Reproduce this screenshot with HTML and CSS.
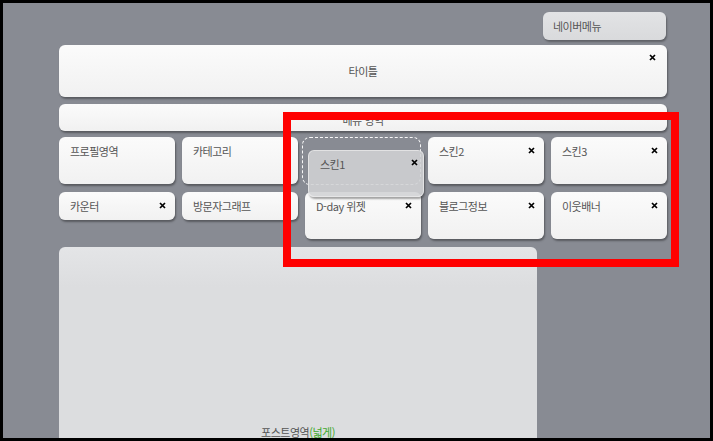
FILE: index.html
```html
<!DOCTYPE html>
<html lang="ko">
<head>
<meta charset="utf-8">
<title>레이아웃 설정</title>
<link rel="stylesheet" href="styles.css">
</head>
<body>
<div class="frame">
  <div class="page">
    <div class="topbar"><div class="naver">네이버메뉴</div></div>
    <div class="block title">타이틀<svg class="x" viewBox="0 0 7 7"><path d="M1 1L6 6M6 1L1 6"/></svg></div>
    <div class="block menu">메뉴 영역</div>
    <div class="grid">
      <div class="card">프로필영역</div>
      <div class="card">카테고리</div>
      <div class="slot"></div>
      <div class="card">스킨2<svg class="x" viewBox="0 0 7 7"><path d="M1 1L6 6M6 1L1 6"/></svg></div>
      <div class="card">스킨3<svg class="x" viewBox="0 0 7 7"><path d="M1 1L6 6M6 1L1 6"/></svg></div>
      <div class="card short">카운터<svg class="x" viewBox="0 0 7 7"><path d="M1 1L6 6M6 1L1 6"/></svg></div>
      <div class="card short">방문자그래프</div>
      <div class="card">D-day 위젯<svg class="x" viewBox="0 0 7 7"><path d="M1 1L6 6M6 1L1 6"/></svg></div>
      <div class="card">블로그정보<svg class="x" viewBox="0 0 7 7"><path d="M1 1L6 6M6 1L1 6"/></svg></div>
      <div class="card">이웃배너<svg class="x" viewBox="0 0 7 7"><path d="M1 1L6 6M6 1L1 6"/></svg></div>
    </div>
    <div class="post">포스트영역<span class="wide">(넓게)</span></div>
  </div>
  <div class="card drag">스킨1<svg class="x" viewBox="0 0 7 7"><path d="M1 1L6 6M6 1L1 6"/></svg></div>
  <div class="highlight"></div>
</div>
</body>
</html>
```
FILE: styles.css
```css
* { box-sizing: border-box; }
html, body { margin: 0; padding: 0; background: #000; }
body {
  font-family: "Noto Sans CJK KR", "Noto Sans", sans-serif;
  font-size: 11px;
  color: #555;
}
.frame {
  position: relative;
  width: 713px;
  height: 441px;
  border: 3px solid #000;
  background: #888b93;
  overflow: hidden;
}
.page {
  padding: 9px 0 0 56px;
  width: 664px;
}
.topbar { display: flex; justify-content: flex-end; padding-right: 1px; }
.naver {
  width: 123px;
  height: 28px;
  padding-left: 10px;
  line-height: 28px;
  background: linear-gradient(#e2e3e5, #d9dadc);
  border-radius: 6px;
  box-shadow: 1px 2px 2px rgba(0,0,0,0.3);
  letter-spacing: -0.5px;
}
.block, .card {
  position: relative;
  background: linear-gradient(#fbfbfb, #f1f1f1);
  border-radius: 6px;
  box-shadow: 1px 2px 2px rgba(0,0,0,0.35);
  letter-spacing: -0.5px;
}
.block {
  margin-top: 5px;
  text-align: center;
}
.title { height: 52px; line-height: 52px; }
.menu { margin-top: 7px; height: 27px; padding-top: 5px; line-height: 22px; }
.x {
  position: absolute;
  top: 10px;
  right: 9px;
  width: 7px;
  height: 7px;
  fill: none;
  stroke: #000;
  stroke-width: 1.7;
}
.title .x { top: 9px; right: 11px; }
.grid {
  margin-top: 6px;
  display: grid;
  grid-template-columns: repeat(5, 116px);
  grid-auto-rows: 47px;
  column-gap: 7px;
  row-gap: 8px;
  align-items: start;
}
.card {
  height: 47px;
  padding: 6px 0 0 11px;
  line-height: 16px;
}
.card.short { height: 28px; }
.slot {
  height: 48px;
  margin-left: -3px;
  border: 1px dashed #f8f8f8;
  border-radius: 8px;
}
.post {
  margin-top: 8px;
  width: 478px;
  height: 220px;
  padding-top: 178px;
  text-align: center;
  line-height: 14px;
  background: linear-gradient(#e4e5e7, #dcdddf 40px);
  border-radius: 6px 6px 0 0;
  letter-spacing: -0.5px;
}
.wide { color: #3fa82c; }
.drag {
  position: absolute;
  left: 305px;
  top: 147px;
  width: 116px;
  height: 47px;
  padding: 5px 0 0 11px;
  background: rgba(208, 209, 212, 0.88);
  border: 1px solid rgba(236,236,238,0.7);
}
.drag .x { top: 8px; right: 5px; }
.highlight {
  position: absolute;
  left: 280px;
  top: 109px;
  width: 396px;
  height: 155px;
  border: 8px solid #ff0000;
}
```
